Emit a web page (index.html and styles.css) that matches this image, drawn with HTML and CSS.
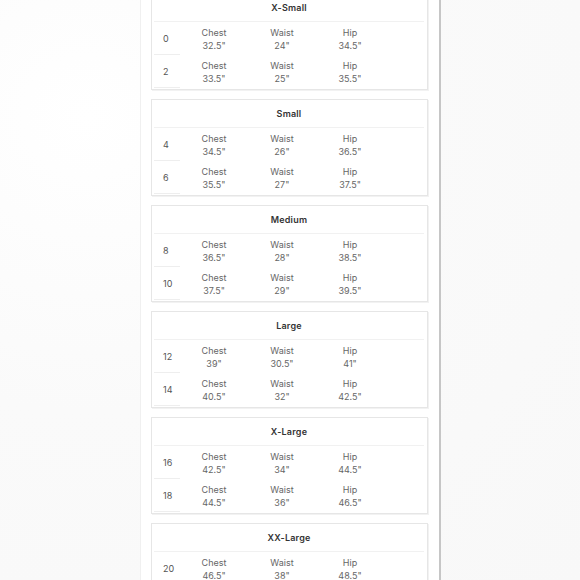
FILE: index.html
```html
<!DOCTYPE html>
<html>
<head>
<meta charset="utf-8">
<link rel="stylesheet" href="styles.css">
</head>
<body>
<div class="page">
  <div class="card first">
    <div class="head">X-Small</div>
    <div class="row"><div class="num">0</div><div class="cell">Chest<br>32.5"</div><div class="cell">Waist<br>24"</div><div class="cell">Hip<br>34.5"</div></div>
    <div class="row"><div class="num">2</div><div class="cell">Chest<br>33.5"</div><div class="cell">Waist<br>25"</div><div class="cell">Hip<br>35.5"</div></div>
  </div>
  <div class="card">
    <div class="head">Small</div>
    <div class="row"><div class="num">4</div><div class="cell">Chest<br>34.5"</div><div class="cell">Waist<br>26"</div><div class="cell">Hip<br>36.5"</div></div>
    <div class="row"><div class="num">6</div><div class="cell">Chest<br>35.5"</div><div class="cell">Waist<br>27"</div><div class="cell">Hip<br>37.5"</div></div>
  </div>
  <div class="card">
    <div class="head">Medium</div>
    <div class="row"><div class="num">8</div><div class="cell">Chest<br>36.5"</div><div class="cell">Waist<br>28"</div><div class="cell">Hip<br>38.5"</div></div>
    <div class="row"><div class="num">10</div><div class="cell">Chest<br>37.5"</div><div class="cell">Waist<br>29"</div><div class="cell">Hip<br>39.5"</div></div>
  </div>
  <div class="card">
    <div class="head">Large</div>
    <div class="row"><div class="num">12</div><div class="cell">Chest<br>39"</div><div class="cell">Waist<br>30.5"</div><div class="cell">Hip<br>41"</div></div>
    <div class="row"><div class="num">14</div><div class="cell">Chest<br>40.5"</div><div class="cell">Waist<br>32"</div><div class="cell">Hip<br>42.5"</div></div>
  </div>
  <div class="card">
    <div class="head">X-Large</div>
    <div class="row"><div class="num">16</div><div class="cell">Chest<br>42.5"</div><div class="cell">Waist<br>34"</div><div class="cell">Hip<br>44.5"</div></div>
    <div class="row"><div class="num">18</div><div class="cell">Chest<br>44.5"</div><div class="cell">Waist<br>36"</div><div class="cell">Hip<br>46.5"</div></div>
  </div>
  <div class="card">
    <div class="head">XX-Large</div>
    <div class="row"><div class="num">20</div><div class="cell">Chest<br>46.5"</div><div class="cell">Waist<br>38"</div><div class="cell">Hip<br>48.5"</div></div>
    <div class="row"><div class="num">22</div><div class="cell">Chest<br>48.5"</div><div class="cell">Waist<br>40"</div><div class="cell">Hip<br>50.5"</div></div>
  </div>
</div>
</body>
</html>
```
FILE: styles.css
```css
html, body {
  margin: 0;
  padding: 0;
  height: 580px;
  overflow: hidden;
}
body {
  background: radial-gradient(ellipse at 15% 20%, #ffffff 0%, #fafafa 45%, #f8f8f8 100%);
  font-family: Inter, "Noto Sans", sans-serif;
}
.page {
  margin-left: 140px;
  width: 288px;
  height: 580px;
  background: #ffffff;
  border-left: 1px solid #f0f0f0;
  border-right: 2px solid #c6c6c6;
  padding: 0 0 0 10px;
  box-sizing: content-box;
  overflow: hidden;
}
.card {
  width: 277px;
  box-sizing: border-box;
  border: 1px solid #e6e6e6;
  box-shadow: 1px 1px 0 #f2f2f2;
  padding: 0 3px 1px 2px;
  margin-bottom: 9px;
}
.card.first {
  margin-top: -7px;
}
.head {
  height: 27px;
  line-height: 28px;
  text-align: center;
  font-size: 9px;
  font-weight: 600;
  letter-spacing: 0.2px;
  color: #333;
  border-bottom: 1px solid #f1f1f1;
}
.row {
  display: flex;
  height: 33px;
  align-items: stretch;
}
.num {
  width: 26px;
  box-sizing: border-box;
  padding-left: 9px;
  border-bottom: 1px solid #eeeeee;
  display: flex;
  align-items: center;
  font-size: 9px;
  color: #555;
}
.cell {
  width: 68px;
  text-align: center;
  font-size: 9px;
  line-height: 13px;
  color: #666;
  display: flex;
  flex-direction: column;
  justify-content: center;
}
```
